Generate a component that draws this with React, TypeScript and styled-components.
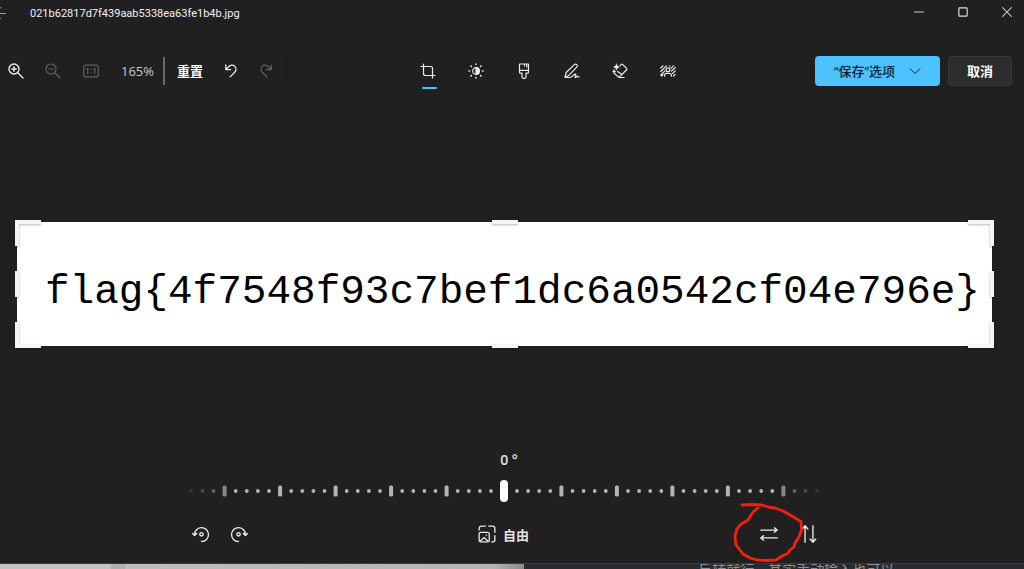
import React, { useState } from "react";
import styled, { createGlobalStyle, css } from "styled-components";

const GlobalStyle = createGlobalStyle`
  * { box-sizing: border-box; }
  html, body { margin: 0; padding: 0; background: #202020; }
  body, button, input {
    font-family: "Open Sans", "Noto Sans CJK SC", sans-serif;
    font-size: 13px;
  }
`;

const Page = styled.div`
  display: flex;
  flex-direction: column;
  min-height: 100vh;
  overflow: hidden;
`;

const Editor = styled.main`
  flex: 1;
  display: flex;
  flex-direction: column;
  background: #202020;
  color: #e4e4e4;
  border-bottom: 1px solid #393b3d;
`;

const TitleBar = styled.header`
  display: flex;
  align-items: center;
  height: 26px;
  background: #202022;
`;

const FileName = styled.h1`
  flex: 1;
  margin: 0 0 0 14px;
  padding-top: 2px;
  font-family: Roboto, "Noto Sans CJK SC", sans-serif;
  font-size: 11px;
  line-height: 16px;
  font-weight: 400;
  color: #f2f2f2;
`;

const buttonReset = css`
  display: flex;
  align-items: center;
  justify-content: center;
  margin: 0;
  padding: 0;
  border: 0;
  background: transparent;
  color: inherit;
`;

const BackButton = styled.button`
  ${buttonReset}
  width: 16px;
  height: 26px;
  justify-content: flex-start;
  color: #a0a0a0;
`;

const WindowButton = styled.button`
  ${buttonReset}
  width: 44px;
  height: 24px;
`;

const WindowButtons = styled.div`
  display: flex;
  align-self: flex-start;
  margin-right: -5px;
`;

const Toolbar = styled.div`
  display: flex;
  align-items: center;
  height: 42px;
  margin-top: 24px;
  padding-right: 12px;
`;

const ZoomGroup = styled.div`
  display: flex;
  align-items: center;
  width: 287px;
  height: 40px;
  border: 1px solid #1b1b1b;
  border-left: 0;
  border-radius: 0 6px 6px 0;
`;

const IconButton = styled.button<{ $width: number; $dim?: boolean }>`
  ${buttonReset}
  position: relative;
  width: ${(p) => p.$width}px;
  height: 40px;
  color: ${(p) => (p.$dim ? "#606060" : "#ececec")};
`;

const ZoomValue = styled.span`
  width: 55px;
  padding-right: 9px;
  text-align: right;
  color: #c8c8c8;
`;

const ResetButton = styled.button`
  ${buttonReset}
  width: 52px;
  height: 28px;
  border-left: 2px solid #6b6b6b;
  font-weight: 700;
  line-height: 16px;
  color: #ffffff;
`;

const ToolTabs = styled.nav`
  flex: 1;
  display: flex;
  justify-content: center;
  padding-right: 7px;
`;

const ActiveMark = styled.span`
  position: absolute;
  left: 18px;
  bottom: 2px;
  width: 15px;
  height: 2px;
  border-radius: 1px;
  background: #4cc2ff;
`;

const ActionButton = styled.button<{ $primary?: boolean }>`
  ${buttonReset}
  height: 30px;
  border-radius: 4px;
  padding-bottom: 1px;
  ${(p) =>
    p.$primary
      ? css`
          width: 125px;
          gap: 14px;
          background: #4cc2ff;
          color: #06202e;
          font-weight: 500;
        `
      : css`
          width: 64px;
          margin-left: 8px;
          background: #2d2d2d;
          border: 1px solid #363636;
          color: #ffffff;
          font-weight: 700;
        `}
`;

const Canvas = styled.section`
  flex: 1;
  display: flex;
  align-items: center;
  padding: 24px 32px 0 17px;
`;

const Photo = styled.figure`
  position: relative;
  display: flex;
  align-items: center;
  width: 100%;
  height: 124px;
  margin: 0;
  padding: 16px 0 0 28px;
  background: #ffffff;
`;

const PhotoText = styled.p`
  margin: 0;
  font-family: "Liberation Mono", monospace;
  font-size: 41px;
  line-height: 60px;
  color: #000000;
  white-space: nowrap;
`;

type Spot = "tl" | "t" | "tr" | "l" | "r" | "bl" | "b" | "br";

const EDGE = "4px solid #f6f4f4";

const Handle = styled.span<{ $spot: Spot }>`
  position: absolute;
  width: 26px;
  height: 26px;
  ${(p) => p.$spot.includes("t") && `top: -2px; border-top: ${EDGE};`}
  ${(p) => p.$spot.includes("b") && `bottom: -2px; border-bottom: ${EDGE};`}
  ${(p) => p.$spot.includes("l") && `left: -2px; border-left: ${EDGE};`}
  ${(p) => p.$spot.includes("r") && `right: -2px; border-right: ${EDGE};`}
  ${(p) => (p.$spot === "t" || p.$spot === "b") && "left: calc(50% - 13px); height: 4px;"}
  ${(p) => (p.$spot === "l" || p.$spot === "r") && "top: calc(50% - 13px); width: 4px;"}
  filter: drop-shadow(0 1px 1px rgba(0, 0, 0, 0.28));
`;

const Controls = styled.section`
  display: flex;
  flex-direction: column;
  align-items: center;
  gap: 12px;
  padding: 0 16px 9px 0;
`;

const AngleLabel = styled.label`
  height: 16px;
  padding-left: 10px;
  line-height: 16px;
  font-size: 14px;
  font-weight: 600;
`;

const Ruler = styled.div`
  position: relative;
  width: 640px;
  height: 22px;
`;

const Ticks = styled.svg`
  display: block;
`;

const AngleInput = styled.input`
  appearance: none;
  position: absolute;
  inset: 0;
  width: 100%;
  height: 22px;
  margin: 0;
  background: transparent;
  &::-webkit-slider-thumb {
    appearance: none;
    width: 8px;
    height: 22px;
    border-radius: 4px;
    background: #ffffff;
  }
`;

const ActionRow = styled.div`
  display: flex;
  justify-content: space-between;
  align-items: center;
  width: 650px;
  padding-left: 3px;
`;

const Group = styled.div`
  display: flex;
`;

const RatioButton = styled.button`
  ${buttonReset}
  gap: 7px;
  height: 40px;
  font-weight: 700;
`;

const Scribble = styled.svg`
  position: absolute;
  left: -17px;
  top: -14px;
  overflow: visible;
  pointer-events: none;
  z-index: 1;
`;

const Behind = styled.footer`
  display: flex;
  height: 5px;
  overflow: hidden;
`;

const BehindLight = styled.div`
  width: 51.2%;
  background: linear-gradient(90deg, #c4c3c4 0 111px, #b0b0b0 111px 125px, #bdbdbd 125px, #b4b4b4 94%, #8a8a8a);
`;

const BehindDark = styled.div`
  flex: 1;
  padding-left: 17%;
  background: #292b2f;
  color: #8d9094;
`;

const BehindText = styled.p`
  margin: -2px 0 0;
  font-size: 14px;
  line-height: 16px;
  white-space: nowrap;
`;

const Icon = ({ size = 16, children, w = 1.2 }: { size?: number; w?: number; children: React.ReactNode }) => (
  <svg
    width={size}
    height={size}
    viewBox="0 0 16 16"
    fill="none"
    stroke="currentColor"
    strokeWidth={w}
    strokeLinecap="round"
    strokeLinejoin="round"
    aria-hidden="true"
  >
    {children}
  </svg>
);

const tools = [
  {
    name: "裁剪",
    icon: <path d="M1 3.5h9.5a2 2 0 0 1 2 2V15M3.5 1v9.5a2 2 0 0 0 2 2H15" />,
  },
  {
    name: "调整",
    icon: (
      <>
        <circle cx="8" cy="8" r="3.3" />
        <path d="M8 4.7a3.3 3.3 0 0 1 0 6.6z" fill="currentColor" />
        <path
          d="M8 .9v.6M8 14.5v.6M.9 8h.6M14.5 8h.6M3 3l.4.4M12.6 12.6l.4.4M3 13l.4-.4M12.6 3.4l.4-.4"
          strokeWidth="1.5"
        />
      </>
    ),
  },
  {
    name: "滤镜",
    icon: (
      <path d="M3.500 1h9v8.200a1 1 0 0 1-1 1H10v3.300a2 2 0 0 1-4 0v-3.300H4.500a1 1 0 0 1-1-1zM3.500 7.300h9M8.500 1v1.800M10.700 1v3" />
    ),
  },
  {
    name: "标记",
    icon: (
      <path d="M1 14l1.200-4.500L10.300 1.600a1.700 1.700 0 0 1 2.500 0 1.700 1.700 0 0 1 0 2.500L5 12.200 1 14.500h4.500c3-.2 4.500-3.800 6-3.300 1.300.5-1.500 3-.2 3.300 1 .2 1.500-1.500 2.400-1.300.6.200.6.800 1.500.8" />
    ),
  },
  {
    name: "擦除",
    icon: (
      <>
        <path d="M8 2.600l1-1a1.300 1.300 0 0 1 1.800 0l3.600 3.600a1.300 1.300 0 0 1 0 1.800L7.700 13.600a1.300 1.300 0 0 1-1.800 0L2.500 10.500M5.500 8.500l4.700 3M6.800 14.500H12" />
        <path d="M4.500 1l.9 2.100 2.100.9-2.100.9-.9 2.100-.9-2.100L1.500 4l2.100-.9zM2 6.500l.5 1.500 1.500.5-1.500.5L2 10.500 1.500 9 .300 8.500 1.500 8z" fill="currentColor" strokeWidth=".5" />
      </>
    ),
  },
  {
    name: "背景",
    icon: (
      <>
        <path d="M.8 5L3 2.800M.8 8.500L6.500 2.800M.8 12L5 7.800M9.500 3.200l.4-.4M11 5.200l2.400-2.400M11.500 8.200L15.200 4.500M12.500 10.600l2.700-2.700M13.500 13l1.700-1.700M1.500 13.200l1.500-1.500" />
        <circle cx="8" cy="6.800" r="1.900" />
        <path d="M4.600 13.200v-1a1.800 1.800 0 0 1 1.800-1.800h3.200a1.800 1.800 0 0 1 1.800 1.800v1" />
      </>
    ),
  },
];

const tickOpacity = (k: number) => (k > 26 ? 0.14 : k > 25 ? 0.28 : k > 24 ? 0.45 : k > 23 ? 0.7 : 1);

const RulerTicks = () => (
  <Ticks width="640" height="22" viewBox="-320 -11 640 22" fill="#b4b4b4" aria-hidden="true">
    {[-1, 1].flatMap((side) =>
      Array.from({ length: 28 }, (_, k) => {
        const x = side * (13 + k * 11.1);
        return k % 5 === 4 ? (
          <rect key={side * (k + 1)} x={x - 2} y="-5.500" width="4" height="11" rx="1.500" opacity={tickOpacity(k)} />
        ) : (
          <circle key={side * (k + 1)} cx={x} cy="0" r="1.900" opacity={tickOpacity(k)} />
        );
      })
    )}
  </Ticks>
);

const spots: Spot[] = ["tl", "t", "tr", "l", "r", "bl", "b", "br"];

export default function App() {
  const [angle, setAngle] = useState(0);
  return (
    <Page>
      <GlobalStyle />
      <Editor>
        <TitleBar>
          <BackButton aria-label="返回">
            <svg width="7" height="12" viewBox="0 0 7 12" fill="none" stroke="currentColor" aria-hidden="true">
              <path d="M-6 6.500H6M-1 2L1.500 0M-2 10L1 12" />
            </svg>
          </BackButton>
          <FileName>021b62817d7f439aab5338ea63fe1b4b.jpg</FileName>
          <WindowButtons>
            <WindowButton aria-label="最小化">
              <Icon size={12}><path d="M2 8h12" /></Icon>
            </WindowButton>
            <WindowButton aria-label="最大化">
              <Icon size={12} w={1.500}><rect x="2.500" y="2.500" width="11" height="11" rx="1" /></Icon>
            </WindowButton>
            <WindowButton aria-label="关闭">
              <Icon size={12} w={1.400}><path d="M2 2l12 12M14 2L2 14" /></Icon>
            </WindowButton>
          </WindowButtons>
        </TitleBar>

        <Toolbar>
          <ZoomGroup>
            <IconButton $width={32} aria-label="放大">
              <Icon w={1.400}><circle cx="6" cy="6" r="5" /><path d="M9.800 9.800L15 15M6 3.800v4.400M3.800 6h4.400" /></Icon>
            </IconButton>
            <IconButton $width={42} $dim aria-label="缩小">
              <Icon><circle cx="6" cy="6" r="5" /><path d="M9.800 9.800L15 15M3.800 6h4.400" /></Icon>
            </IconButton>
            <IconButton $width={34} $dim aria-label="实际大小">
              <Icon>
                <rect x=".7" y="2.200" width="14.600" height="11.600" rx="2" />
                <path d="M3.800 6.200l1-.8v5M10.800 6.200l1-.8v5M8 6.500v.1M8 9.500v.1" />
              </Icon>
            </IconButton>
            <ZoomValue>165%</ZoomValue>
            <ResetButton>重置</ResetButton>
            <IconButton $width={32} aria-label="撤消">
              <Icon size={14} w={1.500}><path d="M2 1v5.500h5.500M2.200 6.200L6 2.600a4.600 4.600 0 0 1 6.500 6.500L7 14.700" /></Icon>
            </IconButton>
            <IconButton $width={38} $dim aria-label="重做">
              <Icon size={14} w={1.500}><path d="M14 1v5.500H8.500M13.800 6.200L10 2.600a4.600 4.600 0 0 0-6.500 6.500L9 14.700" /></Icon>
            </IconButton>
          </ZoomGroup>

          <ToolTabs aria-label="编辑工具">
            {tools.map((tool, i) => (
              <IconButton key={tool.name} $width={48} aria-label={tool.name}>
                <Icon>{tool.icon}</Icon>
                {i === 0 && <ActiveMark />}
              </IconButton>
            ))}
          </ToolTabs>

          <ActionButton $primary>
            “保存”选项
            <Icon size={12} w={1.300}><path d="M1.500 5L8 11.500 14.500 5" /></Icon>
          </ActionButton>
          <ActionButton>取消</ActionButton>
        </Toolbar>

        <Canvas>
          <Photo>
            <PhotoText>{"flag{4f7548f93c7bef1dc6a0542cf04e796e}"}</PhotoText>
            {spots.map((spot) => (
              <Handle key={spot} $spot={spot} />
            ))}
          </Photo>
        </Canvas>

        <Controls>
          <AngleLabel htmlFor="angle">{angle} °</AngleLabel>
          <Ruler>
            <RulerTicks />
            <AngleInput
              id="angle"
              type="range"
              min={-45}
              max={45}
              value={angle}
              onChange={(e) => setAngle(Number(e.target.value))}
            />
          </Ruler>
          <ActionRow>
            <Group>
              <IconButton $width={38} aria-label="逆时针旋转">
                <Icon size={18}>
                  <path d="M2.300 9A6.200 6.200 0 1 1 8.500 14.700M.6 7.500l1.700 1.800L4.200 7.500" />
                  <circle cx="8.400" cy="8.300" r="1.500" />
                </Icon>
              </IconButton>
              <IconButton $width={38} aria-label="顺时针旋转">
                <Icon size={18}>
                  <path d="M13.700 9A6.200 6.200 0 1 0 7.500 14.700M15.400 7.500l-1.700 1.800-1.900-1.800" />
                  <circle cx="7.600" cy="8.300" r="1.500" />
                </Icon>
              </IconButton>
            </Group>
            <RatioButton>
              <Icon size={18}>
                <path d="M1 4.500V3a2 2 0 0 1 2-2h3.500M9.500 1H13a2 2 0 0 1 2 2v3.500M15 9.500V13a2 2 0 0 1-2 2h-.8" />
                <rect x="1" y="6.500" width="9" height="8.500" rx="1.500" />
                <path d="M2 14.500l3.500-3.300L9 14.500M7.500 9v.1" />
              </Icon>
              自由
            </RatioButton>
            <Group>
              <IconButton $width={40} aria-label="水平翻转">
                <Icon size={18}>
                  <path d="M.7 4.500h14.600M12.800 2.500l2.500 2-2.500 2M15.300 11.500H.7M3.200 9.500l-2.500 2 2.500 2" />
                </Icon>
                <Scribble width="74" height="64" viewBox="732 500 74 64" fill="none" stroke="#f5200f" strokeWidth="2.800" strokeLinecap="round" strokeLinejoin="round" aria-hidden="true">
                  <path d="M742 505L752 504.500L762 505L770 507.500L775 508L783 511L790 515L801 521.500L801.500 530L799 537L795 543L794 547L790 550L787 554L782 556L776 560L766 560.500L757 560L750 558L743 554L740 550L736 545L735 536L737 529L740 525L748 520L753 512L758 508" />
                </Scribble>
              </IconButton>
              <IconButton $width={40} aria-label="垂直翻转">
                <Icon size={18}>
                  <path d="M4.500 15.300V.7M2 3.500L4.500.7 7 3.500M11.500.7v14.600M9 12.500l2.500 2.800 2.500-2.800" />
                </Icon>
              </IconButton>
            </Group>
          </ActionRow>
        </Controls>
      </Editor>
      <Behind>
        <BehindLight />
        <BehindDark>
          <BehindText>反转就行，其实手动输入也可以</BehindText>
        </BehindDark>
      </Behind>
    </Page>
  );
}
